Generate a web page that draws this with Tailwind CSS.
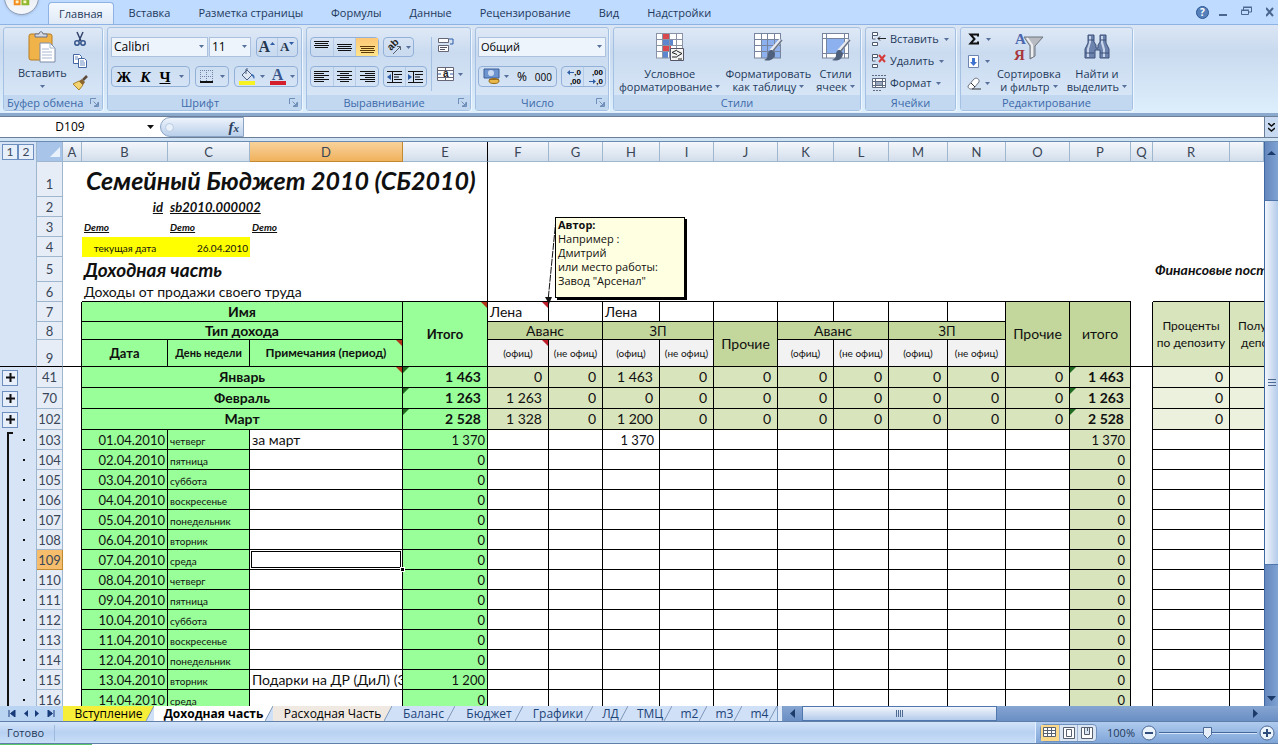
<!DOCTYPE html>
<html lang="ru">
<head>
<meta charset="utf-8">
<title>Семейный Бюджет 2010</title>
<script src="https://cdn.jsdelivr.net/npm/@tailwindcss/browser@4"></script>
</head>
<body class="flex h-screen flex-col overflow-hidden bg-[#bfdbff] font-['Open_Sans','Noto_Sans',sans-serif] text-[11px] leading-4 text-[#1e395b]">

<svg class="hidden" aria-hidden="true">
  <symbol id="dd" viewBox="0 0 5 3"><path d="M0 0h5L2.500 3z" fill="#56709a"/></symbol>
  <symbol id="launch" viewBox="0 0 9 9"><path d="M.5 6V.5H6M8.500 4v4.500H4M3.500 3.500L7 7M7.500 4.500v3h-3" fill="none" stroke="#6f8fb9"/></symbol>
  <symbol id="cells" viewBox="0 0 16 16"><path d="M1.500 1.500h5v3h-5zM1.500 11.500h5v3h-5zM1.500 4.500v3.500h3" fill="#fff" stroke="#4c5a70"/></symbol>
</svg>

<!-- Ribbon tabs -->
<header class="relative flex h-6 shrink-0 items-end justify-between overflow-hidden">
  <button aria-label="Office" class="absolute -top-5 left-1 size-[35px] rounded-full border border-[#8a9bb5] bg-linear-to-b from-[#dfe6ef] to-[#f6f8fb] shadow">
    <svg viewBox="0 0 34 34" class="size-full"><path d="M9 17h7v8H9z" fill="#f28a1c"/><path d="M17 17h8v8h-8z" fill="#8db72c"/><path d="M11 20h3v3h-3zM19 20h3v3h-3z" fill="#fff4c8"/></svg>
  </button>
  <nav class="ml-12 flex items-end" role="tablist">
    <button role="tab" aria-selected="true" class="mr-px h-[22px] rounded-t border border-b-0 border-[#8db2e3] bg-linear-to-b from-[#f4f9ff] to-[#dfe9f6] px-[10px]">Главная</button>
    <button role="tab" class="h-[22px] px-[14px]">Вставка</button>
    <button role="tab" class="h-[22px] px-[14px]">Разметка страницы</button>
    <button role="tab" class="h-[22px] px-[14px]">Формулы</button>
    <button role="tab" class="h-[22px] px-[14px]">Данные</button>
    <button role="tab" class="h-[22px] px-[14px]">Рецензирование</button>
    <button role="tab" class="h-[22px] px-[14px]">Вид</button>
    <button role="tab" class="h-[22px] px-[14px]">Надстройки</button>
  </nav>
  <div class="flex h-full items-center gap-[10px] pr-1">
    <button aria-label="Справка" class="flex size-[13px] items-center justify-center rounded-full border border-[#2d5796] bg-[#5680ba] text-[10px] font-bold leading-none text-white">?</button>
    <button aria-label="Свернуть"><svg class="h-3 w-2"><path d="M0 9h8" stroke="#4a668f" stroke-width="2"/></svg></button>
    <button aria-label="Восстановить" class="ml-1"><svg class="h-3 w-[11px]"><path d="M2.500 4V1.500h8V6H8M.5 4.500h7v4h-7zM0 4h8M2 1h9" fill="none" stroke="#4a668f"/></svg></button>
    <button aria-label="Закрыть" class="ml-1"><svg class="h-3 w-2"><path d="M0 2l7 8M7 2L0 10" stroke="#4a668f" stroke-width="2"/></svg></button>
  </div>
</header>

<!-- Ribbon -->
<section class="flex h-[92px] shrink-0 items-start gap-1 border-t border-b-[3px] border-t-[#8db2e3] border-b-[#8aa9cc] bg-linear-to-b from-[#dbe6f4] via-[#c9daef] via-30% to-[#ddeffc] px-[3px] pt-[2px]">

  <div class="flex h-[84px] w-[100px] flex-col rounded-[3px] border border-[#a4c0e2] bg-linear-to-b from-[#dfe9f6] via-[#cadbf0] via-30% to-[#dbe9f8] shadow-[1px_1px_0_#eef6ff]">
    <div class="flex flex-1 justify-between pt-[3px] pr-[14px] pl-[14px]">
      <button class="flex flex-col items-center">
        <svg class="size-8" viewBox="0 0 32 32"><rect x="3" y="3" width="23" height="26" rx="2" fill="#f0b34a" stroke="#b77c22"/><path d="M9 6V3h4c0-3 4-3 4 0h4v3z" fill="#d5dae2" stroke="#66708a"/><path d="M14 12h10l5 5v14H14z" fill="#fff" stroke="#7c8ca8"/><path d="M24 12v5h5M16 18h7M16 21h10M16 24h10M16 27h10" fill="none" stroke="#a9b8d2"/></svg>
        <span class="mt-[2px]">Вставить</span>
        <svg class="mt-1 h-[3px] w-[5px]"><use href="#dd"/></svg>
      </button>
      <div class="flex flex-col items-center gap-[6px]">
        <button aria-label="Вырезать"><svg class="block size-4" viewBox="0 0 16 16"><path d="M5 1l4 9M11 1L7 10" stroke="#33456c" stroke-width="1.500"/><circle cx="5" cy="12" r="2.200" fill="none" stroke="#33528a" stroke-width="1.500"/><circle cx="11" cy="12" r="2.200" fill="none" stroke="#33528a" stroke-width="1.500"/></svg></button>
        <button aria-label="Копировать"><svg class="block size-4" viewBox="0 0 16 16"><path d="M1.500 1.500h6l2 2v7h-8z" fill="#fff" stroke="#4467a3"/><path d="M6.500 5.500h6l2 2v7h-8z" fill="#fff" stroke="#4467a3"/><path d="M3 4h3M3 6h3M8 8h4M8 10h5M8 12h5" stroke="#6b8cc4"/></svg></button>
        <button aria-label="Формат по образцу"><svg class="block size-4" viewBox="0 0 16 16"><path d="M1 9l6-3 4 4-4 5z" fill="#f3d36f" stroke="#a8812e"/><path d="M7 6l3-2 3 3-2 3z" fill="#8a6530"/><path d="M11 5l4-4" stroke="#5b4a3a" stroke-width="2.500"/></svg></button>
      </div>
    </div>
    <div class="flex h-[15px] items-center justify-between bg-[#c1d8f0] px-[3px] whitespace-nowrap text-[#3e6aaa]"><span>Буфер обмена</span><svg class="size-[9px]"><use href="#launch"/></svg></div>
  </div>

  <div class="flex h-[84px] w-[195px] flex-col rounded-[3px] border border-[#a4c0e2] bg-linear-to-b from-[#dfe9f6] via-[#cadbf0] via-30% to-[#dbe9f8] shadow-[1px_1px_0_#eef6ff]">
    <div class="flex flex-1 flex-col gap-[9px] px-[3px] pt-[9px] text-black">
      <div class="flex h-5 items-stretch gap-px">
        <label class="relative w-[97px]"><select aria-label="Шрифт" class="size-full appearance-none border border-[#abc1de] bg-[#edf4fc] pl-[2px] text-[12px]"><option>Calibri</option></select><svg class="absolute top-2 right-1 h-[3px] w-[5px]"><use href="#dd"/></svg></label>
        <label class="relative w-[42px]"><select aria-label="Размер шрифта" class="size-full appearance-none border border-[#abc1de] bg-[#edf4fc] pl-[2px] text-[12px]"><option>11</option></select><svg class="absolute top-2 right-1 h-[3px] w-[5px]"><use href="#dd"/></svg></label>
        <div class="ml-1 flex flex-1 rounded-sm border border-[#93b1d8] font-['Liberation_Serif',serif] font-bold text-[#24364f]">
          <button class="flex flex-1 items-center justify-center border-r border-[#b4cae6] text-[16px]">A<svg class="mb-2 h-[3px] w-[5px]"><path d="M0 3h5L2.500 0z" fill="#2f5da5"/></svg></button>
          <button class="flex flex-1 items-center justify-center text-[13px]">A<svg class="mb-2 h-[3px] w-[5px]"><path d="M0 0h5L2.500 3z" fill="#2f5da5"/></svg></button>
        </div>
      </div>
      <div class="flex h-[21px] items-stretch gap-[5px]">
        <div class="flex w-[79px] items-center justify-around rounded-sm border border-[#93b1d8] font-['Liberation_Serif',serif] text-[15px] font-bold">
          <button>Ж</button><button class="italic">К</button><button class="underline">Ч</button><svg class="h-[3px] w-[5px]"><use href="#dd"/></svg>
        </div>
        <button aria-label="Границы" class="flex w-[34px] items-center justify-around rounded-sm border border-[#93b1d8]"><svg class="size-[15px]"><path d="M1.500 1v12M7.500 1v12M13.500 1v12M1 1.500h13M1 7.500h13" stroke="#6f84a5" stroke-dasharray="1 1"/><path d="M1 13h13" stroke="#111" stroke-width="2"/></svg><svg class="h-[3px] w-[5px]"><use href="#dd"/></svg></button>
        <div class="flex flex-1 items-center justify-around rounded-sm border border-[#93b1d8]">
          <button aria-label="Цвет заливки" class="flex items-center gap-1"><svg class="h-[17px] w-[18px]" viewBox="0 0 18 17"><path d="M4 7l5-5 5 5-5 5z" fill="#dfe7f2" stroke="#4b5f82"/><path d="M8 6V1h2" fill="none" stroke="#4b5f82"/><path d="M14 6c3 1 3 4 2 5-1-1-1-3-3-4z" fill="#3f6fb7"/><path d="M1 13h16v4H1z" fill="#f6f224"/></svg><svg class="h-[3px] w-[5px]"><use href="#dd"/></svg></button>
          <button aria-label="Цвет текста" class="flex items-center gap-1"><span class="flex h-[17px] w-4 flex-col items-center border-b-4 border-[#d3202c] font-['Liberation_Serif',serif] text-[16px] font-bold leading-[14px] text-[#3a568c]">A</span><svg class="h-[3px] w-[5px]"><use href="#dd"/></svg></button>
        </div>
      </div>
    </div>
    <div class="flex h-[15px] items-center bg-[#c1d8f0] px-[3px] text-[#3e6aaa]"><span class="flex-1 text-center">Шрифт</span><svg class="size-[9px]"><use href="#launch"/></svg></div>
  </div>

  <div class="flex h-[84px] w-[165px] flex-col rounded-[3px] border border-[#a4c0e2] bg-linear-to-b from-[#dfe9f6] via-[#cadbf0] via-30% to-[#dbe9f8] shadow-[1px_1px_0_#eef6ff]">
    <div class="flex flex-1 gap-1 pt-[9px] pl-[3px]">
      <div class="flex w-[117px] flex-col gap-[9px]">
        <div class="flex h-5 gap-1">
          <div class="flex w-[69px] rounded-sm border border-[#93b1d8]">
            <button aria-label="По верхнему краю" class="flex flex-1 items-start justify-center border-r border-[#b4cae6] pt-[3px]"><svg class="h-[9px] w-[15px]"><path d="M0 .5h15M1 2.500h13M0 4.500h15M1 6.500h13" stroke="#111"/></svg></button>
            <button aria-label="По середине" class="flex flex-1 items-center justify-center border-r border-[#b4cae6]"><svg class="h-[7px] w-[15px]"><path d="M0 .5h15M1 2.500h13M0 4.500h15M1 6.500h13" stroke="#111"/></svg></button>
            <button aria-label="По нижнему краю" class="flex flex-1 items-end justify-center bg-linear-to-b from-[#fdc877] to-[#ffe48a] pb-[2px]"><svg class="h-2 w-[15px]"><path d="M0 .5h15M1 2.500h13M0 4.500h15M1 6.500h13" stroke="#5b3a08"/></svg></button>
          </div>
          <button aria-label="Ориентация" class="flex w-[31px] items-center justify-around rounded-sm border border-[#93b1d8]"><svg class="size-4" viewBox="0 0 16 16"><text font-size="10" font-weight="bold" font-family="Liberation Sans" transform="translate(5 12) rotate(-45)" fill="#222">ab</text><path d="M7 15l7-7M14.500 11V7.500H11" stroke="#56606f" fill="none"/></svg><svg class="h-[3px] w-[5px]"><use href="#dd"/></svg></button>
        </div>
        <div class="flex h-[21px] gap-1">
          <div class="flex w-[69px] rounded-sm border border-[#93b1d8]">
            <button aria-label="По левому краю" class="flex flex-1 items-center justify-center border-r border-[#b4cae6]"><svg class="h-[11px] w-[15px]"><path d="M0 .5h15M0 2.500h10M0 4.500h15M0 6.500h10M0 8.500h15M0 10.500h10" stroke="#111"/></svg></button>
            <button aria-label="По центру" class="flex flex-1 items-center justify-center border-r border-[#b4cae6]"><svg class="h-[11px] w-[15px]"><path d="M0 .5h15M3 2.500h9M0 4.500h15M3 6.500h9M0 8.500h15M3 10.500h9" stroke="#111"/></svg></button>
            <button aria-label="По правому краю" class="flex flex-1 items-center justify-center"><svg class="h-[11px] w-[15px]"><path d="M0 .5h15M5 2.500h10M0 4.500h15M5 6.500h10M0 8.500h15M5 10.500h10" stroke="#111"/></svg></button>
          </div>
          <div class="flex w-[44px] rounded-sm border border-[#93b1d8]">
            <button aria-label="Уменьшить отступ" class="flex flex-1 items-center justify-center border-r border-[#b4cae6]"><svg class="h-3 w-[15px]"><path d="M0 .5h15M7 3.500h8M7 6h5M7 8.500h8M0 11.500h15M5.500 0v12" stroke="#111"/><path d="M0 6l4-3v6z" fill="#2f5da5"/></svg></button>
            <button aria-label="Увеличить отступ" class="flex flex-1 items-center justify-center"><svg class="h-3 w-[15px]"><path d="M0 .5h15M7 3.500h8M7 6h5M7 8.500h8M0 11.500h15M5.500 0v12" stroke="#111"/><path d="M4 6L0 3v6z" fill="#2f5da5"/></svg></button>
          </div>
        </div>
      </div>
      <div class="mb-1 flex flex-col gap-3 border-l border-[#a4c0e2] pl-[5px]">
        <button aria-label="Перенос текста"><svg class="size-[17px]" viewBox="0 0 17 17"><path d="M1.500 1.500h10v4h-10zM1.500 8.500h10v6h-10z" fill="#fff" stroke="#667"/><path d="M3 10.500h7M3 12.500h5" stroke="#556"/><path d="M12 2h4v5h-3" fill="none" stroke="#2f5da5"/></svg></button>
        <button aria-label="Объединить" class="flex items-center gap-1"><svg class="h-4 w-[17px]" viewBox="0 0 17 16"><path d="M.5 1.500h16v13H.5zM8.500 1v3M8.500 12v3M0 4.500h17M0 11.500h17" fill="#fff" stroke="#667"/><text x="6" y="11" font-size="10" font-weight="bold" font-family="Liberation Sans" fill="#222">a</text><path d="M1 8h3M13 8h3" stroke="#2f5da5"/></svg><svg class="h-[3px] w-[5px]"><use href="#dd"/></svg></button>
      </div>
    </div>
    <div class="flex h-[15px] items-center bg-[#c1d8f0] px-[3px] text-[#3e6aaa]"><span class="flex-1 text-center">Выравнивание</span><svg class="size-[9px]"><use href="#launch"/></svg></div>
  </div>

  <div class="flex h-[84px] w-[134px] flex-col rounded-[3px] border border-[#a4c0e2] bg-linear-to-b from-[#dfe9f6] via-[#cadbf0] via-30% to-[#dbe9f8] shadow-[1px_1px_0_#eef6ff]">
    <div class="flex flex-1 flex-col gap-[9px] px-[2px] pt-[9px] text-black">
      <label class="relative h-5"><select aria-label="Числовой формат" class="size-full appearance-none border border-[#abc1de] bg-[#edf4fc] pl-[2px]"><option>Общий</option></select><svg class="absolute top-2 right-1 h-[3px] w-[5px]"><use href="#dd"/></svg></label>
      <div class="flex h-[21px] gap-1">
        <div class="flex flex-1 items-center justify-between rounded-sm border border-[#93b1d8] px-1">
          <button aria-label="Финансовый формат" class="flex items-center gap-1"><svg class="size-[17px]" viewBox="0 0 17 17"><path d="M1 1h15v9H1z" fill="#6e94cf" stroke="#3d5f9c"/><circle cx="8" cy="5" r="3" fill="#c9d9f2"/><ellipse cx="11" cy="13" rx="5" ry="2.500" fill="#e9b84a" stroke="#9b6d18"/><path d="M6 11.500h10" stroke="#9b6d18"/></svg><svg class="h-[3px] w-[5px]"><use href="#dd"/></svg></button>
          <button class="text-[12px]">%</button><button class="text-[10px]">000</button>
        </div>
        <div class="flex w-[45px] rounded-sm border border-[#93b1d8] font-['Liberation_Sans',sans-serif] text-[8px] font-bold leading-[9px]">
          <button class="flex flex-1 flex-col items-end justify-center border-r border-[#b4cae6] pr-[2px]"><span class="flex items-center"><svg class="h-[5px] w-[7px]"><path d="M0 2.500L3 0v2h4v1H3v2z" fill="#2f5da5"/></svg>,0</span><span>,00</span></button>
          <button class="flex flex-1 flex-col items-end justify-center pr-[2px]"><span>,00</span><span class="flex items-center"><svg class="h-[5px] w-[7px]"><path d="M7 2.500L4 0v2H0v1h4v2z" fill="#2f5da5"/></svg>,0</span></button>
        </div>
      </div>
    </div>
    <div class="flex h-[15px] items-center bg-[#c1d8f0] px-[3px] text-[#3e6aaa]"><span class="flex-1 text-center">Число</span><svg class="size-[9px]"><use href="#launch"/></svg></div>
  </div>

  <div class="flex h-[84px] w-[248px] flex-col rounded-[3px] border border-[#a4c0e2] bg-linear-to-b from-[#dfe9f6] via-[#cadbf0] via-30% to-[#dbe9f8] shadow-[1px_1px_0_#eef6ff]">
    <div class="flex flex-1 justify-between px-[5px] pt-1 leading-[13px]">
      <button class="flex flex-col items-center">
        <svg class="size-[30px]" viewBox="0 0 30 30"><path d="M1 1h27v25H1z" fill="#fff"/><path d="M7 1h7v6H7zM7 13h9v6H7z" fill="#d9484d"/><path d="M7 7h11v6H7zM7 20h6v6H7z" fill="#5c87cf"/><path d="M1 1.500h27M1 7.500h27M1 13.500h27M1 19.500h27M1 26h27M1.500 1v25M7.500 1v25M14.500 1v25M21.500 1v25M27.500 1v25" stroke="#8a93a5"/><path d="M15.500 16.500h13v12h-13z" fill="#f4f4f4" stroke="#556"/><path d="M22 18l-5 2.500 5 2M17 25h5M22 19l5 2.500-5 3M23 27h4" fill="none" stroke="#222"/></svg>
        <span class="mt-[5px]">Условное</span><span class="flex items-center gap-[3px]">форматирование<svg class="h-[3px] w-[5px]"><use href="#dd"/></svg></span>
      </button>
      <button class="flex flex-col items-center">
        <svg class="size-[30px]" viewBox="0 0 30 30"><path d="M1 1h27v25H1z" fill="#fff"/><path d="M8 8h20v18H8z" fill="#8db0ef"/><path d="M1 1.500h27M1 7.500h27M1 13.500h27M1 19.500h27M1 26h27M1.500 1v25M8.500 1v25M14.500 1v25M21.500 1v25M27.500 1v25" stroke="#77849d"/><path d="M28 8L18 19" stroke="#e8ebf0" stroke-width="4"/><path d="M29 8L19 20" stroke="#6a7486" stroke-width="1.500"/><path d="M19 18c-3 0-4 2-4 5s-2 4-4 5c6 2 11-1 11-7z" fill="#4f607c"/></svg>
        <span class="mt-[5px]">Форматировать</span><span class="flex items-center gap-[3px]">как таблицу<svg class="h-[3px] w-[5px]"><use href="#dd"/></svg></span>
      </button>
      <button class="flex flex-col items-center">
        <svg class="size-[30px]" viewBox="0 0 30 30"><path d="M1 1h27v25H1z" fill="#fff"/><path d="M6 7h17v14H6z" fill="#8db0ef"/><path d="M1 1.500h27M1 6.500h27M1 21.500h27M1 26h27M1.500 1v25M5.500 1v25M23.500 1v25M27.500 1v25" stroke="#77849d"/><path d="M28 8L18 19" stroke="#e8ebf0" stroke-width="4"/><path d="M29 8L19 20" stroke="#6a7486" stroke-width="1.500"/><path d="M19 18c-3 0-4 2-4 5s-2 4-4 5c6 2 11-1 11-7z" fill="#4f607c"/></svg>
        <span class="mt-[5px]">Стили</span><span class="flex items-center gap-[3px]">ячеек<svg class="h-[3px] w-[5px]"><use href="#dd"/></svg></span>
      </button>
    </div>
    <div class="flex h-[15px] items-center justify-center bg-[#c1d8f0] text-[#3e6aaa]">Стили</div>
  </div>

  <div class="flex h-[84px] w-[91px] flex-col rounded-[3px] border border-[#a4c0e2] bg-linear-to-b from-[#dfe9f6] via-[#cadbf0] via-30% to-[#dbe9f8] shadow-[1px_1px_0_#eef6ff]">
    <div class="flex flex-1 flex-col items-start gap-[6px] pt-[3px] pl-[5px]">
      <button class="flex items-center gap-[3px]"><svg class="size-4" viewBox="0 0 16 16"><use href="#cells"/><path d="M15 7.500H7M9 5.500l-2 2 2 2" stroke="#222" fill="none"/></svg>Вставить<svg class="ml-[2px] h-[3px] w-[5px]"><use href="#dd"/></svg></button>
      <button class="flex items-center gap-[3px]"><svg class="size-4" viewBox="0 0 16 16"><use href="#cells"/><path d="M8 2l6 7M14 2L8 9" stroke="#d43a3a" stroke-width="2"/></svg>Удалить<svg class="ml-[2px] h-[3px] w-[5px]"><use href="#dd"/></svg></button>
      <button class="flex items-center gap-[3px]"><svg class="size-4" viewBox="0 0 16 16"><path d="M1.500 3.500h13v9h-13zM4.500 3v10M11.500 3v10M1 6.500h14M1 10.500h14" fill="#fff" stroke="#5d6a80"/><path d="M5 7h6v3H5z" fill="#9aa8bf"/><path d="M1 .5h14M2 15.500h8" stroke="#5d6a80" stroke-dasharray="2 1"/></svg>Формат<svg class="ml-[2px] h-[3px] w-[5px]"><use href="#dd"/></svg></button>
    </div>
    <div class="flex h-[15px] items-center justify-center bg-[#c1d8f0] text-[#3e6aaa]">Ячейки</div>
  </div>

  <div class="flex h-[84px] w-[173px] flex-col rounded-[3px] border border-[#a4c0e2] bg-linear-to-b from-[#dfe9f6] via-[#cadbf0] via-30% to-[#dbe9f8] shadow-[1px_1px_0_#eef6ff]">
    <div class="flex flex-1 justify-between pt-[3px] pr-[5px] pl-[6px] leading-[13px]">
      <div class="flex flex-col gap-[6px]">
        <button aria-label="Сумма" class="flex h-4 items-center gap-[5px]"><svg class="h-3 w-[14px]"><path d="M11 3.500V1.500H3.500L7.500 6l-4 4.500H11v-2" fill="none" stroke="#111" stroke-width="2"/></svg><svg class="h-[3px] w-[5px]"><use href="#dd"/></svg></button>
        <button aria-label="Заполнить" class="flex h-4 items-center gap-1"><svg class="h-[15px] w-[14px]"><path d="M1.500 1.500h10v12h-10z" fill="#fff" stroke="#6d86b1"/><path d="M5 4h3v4h2l-3.500 4L3 8h2z" fill="#3c74d0"/></svg><svg class="h-[3px] w-[5px]"><use href="#dd"/></svg></button>
        <button aria-label="Очистить" class="flex h-4 items-center gap-1"><svg class="h-[15px] w-[14px]"><path d="M1 10l6-7c2-2 6 0 5 3l-5 6c-3 2-6 1-6-2z" fill="#fff" stroke="#6b7383"/><path d="M5 13h9M4 7l4 4" stroke="#333"/></svg><svg class="h-[3px] w-[5px]"><use href="#dd"/></svg></button>
      </div>
      <button class="flex flex-col items-center">
        <svg class="size-[31px]" viewBox="0 0 31 31"><path d="M11 6h19l-8 9v10l-5 3V15z" fill="#b8bcc2" stroke="#6f757e"/><path d="M14 7l5 7v12" fill="none" stroke="#eceef0" stroke-width="2"/><text x="2" y="13" font-size="15" font-weight="bold" font-family="Liberation Serif" fill="#4a66ad">А</text><text x="1" y="29" font-size="15" font-weight="bold" font-family="Liberation Serif" fill="#a8373b">Я</text></svg>
        <span class="mt-[5px]">Сортировка</span><span class="flex items-center gap-[3px]">и фильтр<svg class="h-[3px] w-[5px]"><use href="#dd"/></svg></span>
      </button>
      <button class="flex flex-col items-center">
        <svg class="size-[31px]" viewBox="0 0 31 31"><path d="M7 4h6v7l2 3v3h2v-3l2-3V4h6v8l3 6v9h-9v-8h-5v8H4v-9l3-6z" fill="#6c83ad" stroke="#3d5078"/><path d="M8 5h2v6l-2 7v8H6v-8l2-6zM20 5h2v6l2 7v8h-2v-7l-2-7z" fill="#c8d4ea"/><path d="M4 22h9M19 22h9M7 9h6M19 9h6" stroke="#3d5078"/></svg>
        <span class="mt-[5px]">Найти и</span><span class="flex items-center gap-[3px]">выделить<svg class="h-[3px] w-[5px]"><use href="#dd"/></svg></span>
      </button>
    </div>
    <div class="flex h-[15px] items-center justify-center bg-[#c1d8f0] text-[#3e6aaa]">Редактирование</div>
  </div>
</section>

<!-- Formula bar -->
<section class="flex h-[22px] shrink-0 items-stretch border-y border-[#6c7f99] bg-white text-[12px] text-black">
  <input aria-label="Имя" value="D109" class="w-[140px] bg-white text-center">
  <button aria-label="Список имён" class="flex w-5 items-center justify-center"><svg class="h-1 w-[7px]"><path d="M0 0h7L3.500 4z" fill="#111"/></svg></button>
  <div class="flex w-[84px] items-center justify-between rounded-l-full border border-[#8aa3c4] bg-linear-to-b from-[#eef4fc] to-[#b9cfea] pr-1 pl-1">
    <span class="size-[9px] rounded-full border border-[#b9cbe2] bg-[#e8f0fa]"></span>
    <button class="flex items-baseline font-['Liberation_Serif',serif] text-[15px] font-bold italic text-[#2b3f60]">f<span class="text-[11px]">x</span></button>
  </div>
  <input aria-label="Строка формул" class="min-w-0 flex-1 bg-white px-1">
  <button aria-label="Развернуть строку формул" class="flex w-[14px] items-center justify-center border-l border-[#6c7f99] bg-[#c7daf2]"><svg class="h-[9px] w-[7px]"><path d="M0 0l3.500 3L7 0M0 5l3.500 3L7 5" fill="none" stroke="#111" stroke-width="1.500"/></svg></button>
</section>
<div class="h-1 shrink-0 border-b border-[#6c8bb0] bg-[#cfe3f4]"></div>

<!-- Worksheet -->
<main class="flex min-h-0 flex-1">
  <div class="relative min-w-0 flex-1 overflow-hidden bg-white font-['Lato','Open_Sans',sans-serif] text-[13px] leading-4 text-[#101010]">
    <table class="w-full table-fixed border-separate border-spacing-0 whitespace-nowrap">
      <colgroup>
        <col class="w-[37px]"><col class="w-[26px]"><col class="w-[19px]"><col class="w-[86px]"><col class="w-[82px]"><col class="w-[153px]"><col class="w-[85px]"><col class="w-[61px]"><col class="w-[54px]"><col class="w-[57px]"><col class="w-[54px]"><col class="w-[64px]"><col class="w-[56px]"><col class="w-[55px]"><col class="w-[59px]"><col class="w-[58px]"><col class="w-[64px]"><col class="w-[61px]"><col class="w-[22px]"><col class="w-[77px]"><col>
      </colgroup>
      <thead id="head"></thead>
      <tbody id="top">
        <tr class="h-[35px]"><td class="border-r border-[#9eb6ce] bg-[#d6e4f6]"></td><th class="border-r border-b border-[#9eb6ce] bg-[#e6edf7] pb-1 align-bottom font-normal text-[#3a4657]">1</th><td></td><td colspan="4" class="border-r border-black pl-1 text-[25px] font-bold italic leading-[34px]">Семейный Бюджет 2010 (СБ2010)</td></tr>
        <tr class="h-5"><td class="border-r border-[#9eb6ce] bg-[#d6e4f6]"></td><th class="border-r border-b border-[#9eb6ce] bg-[#e6edf7] font-normal text-[#3a4657]">2</th><td></td><td class="pr-[5px] text-right font-bold italic underline">id</td><td colspan="3" class="border-r border-black pl-[2px] font-bold italic underline">sb2010.000002</td></tr>
        <tr class="h-5"><td class="border-r border-[#9eb6ce] bg-[#d6e4f6]"></td><th class="border-r border-b border-[#9eb6ce] bg-[#e6edf7] font-normal text-[#3a4657]">3</th><td></td><td class="pl-[2px] text-[10px] font-bold italic underline">Demo</td><td class="pl-[2px] text-[10px] font-bold italic underline">Demo</td><td colspan="2" class="border-r border-black pl-[2px] text-[10px] font-bold italic underline">Demo</td></tr>
        <tr class="h-5"><td class="border-r border-[#9eb6ce] bg-[#d6e4f6]"></td><th class="border-r border-b border-[#9eb6ce] bg-[#e6edf7] font-normal text-[#3a4657]">4</th><td></td><td class="bg-[#ffff00] pt-[2px] text-center text-[10px]">текущая дата</td><td class="bg-[#ffff00] pt-[2px] pr-[2px] text-right text-[10px]">26.04.2010</td><td colspan="2" class="border-r border-black"></td></tr>
        <tr class="h-[25px]"><td class="border-r border-[#9eb6ce] bg-[#d6e4f6]"></td><th class="border-r border-b border-[#9eb6ce] bg-[#e6edf7] font-normal text-[#3a4657]">5</th><td></td><td colspan="4" class="border-r border-black pl-[2px] text-[19px] font-bold italic">Доходная часть</td><td colspan="12"></td><td colspan="2" class="overflow-hidden pl-[2px] text-[14px] font-bold italic">Финансовые поступления</td></tr>
        <tr class="h-5"><td class="border-r border-[#9eb6ce] bg-[#d6e4f6]"></td><th class="border-r border-b border-[#9eb6ce] bg-[#e6edf7] font-normal text-[#3a4657]">6</th><td></td><td colspan="4" class="border-r border-b border-black pl-[2px] text-[14px]">Доходы от продажи своего труда</td><td colspan="11" class="border-b border-black"></td><td></td><td colspan="2" class="border-b border-black"></td></tr>
        <tr class="h-5"><td class="border-r border-[#9eb6ce] bg-[#d6e4f6]"></td><th class="border-r border-b border-[#9eb6ce] bg-[#e6edf7] font-normal text-[#3a4657]">7</th><td class="border-r border-black"></td><td colspan="3" class="border-r border-b border-black bg-[#99ff99] text-center text-[14px] font-bold">Имя</td><td rowspan="3" class="relative border-r border-b border-black bg-[#99ff99] text-center font-bold">Итого<i class="absolute top-0 right-0 border-t-[6px] border-l-[6px] border-t-[#b3361b] border-l-transparent"></i></td><td class="relative border-r border-b border-black pl-[2px] text-[14px]">Лена<i class="absolute top-0 right-0 border-t-[6px] border-l-[6px] border-t-[#c0202b] border-l-transparent"></i></td><td class="border-r border-b border-black"></td><td class="border-r border-b border-black pl-[2px] text-[14px]">Лена</td><td class="border-r border-b border-black"></td><td class="border-r border-b border-black"></td><td class="border-r border-b border-black"></td><td class="border-r border-b border-black"></td><td class="border-r border-b border-black"></td><td class="border-r border-b border-black"></td><td rowspan="3" class="border-r border-b border-black bg-[#c3d69b] text-center text-[14px]">Прочие</td><td rowspan="3" class="border-r border-b border-black bg-[#c3d69b] text-center text-[14px]">итого</td><td class="border-r border-black"></td><td rowspan="3" class="border-r border-b border-black bg-[#d8e4bc] text-center text-[12px] leading-[17px]">Проценты<br>по депозиту</td><td rowspan="3" class="overflow-hidden border-b border-black bg-[#d8e4bc] pl-2 text-[12px] leading-[17px]">Получено<br>&nbsp;депозит</td></tr>
        <tr class="h-[18px]"><td class="border-r border-[#9eb6ce] bg-[#d6e4f6]"></td><th class="border-r border-b border-[#9eb6ce] bg-[#e6edf7] font-normal text-[#3a4657]">8</th><td class="border-r border-black"></td><td colspan="3" class="border-r border-b border-black bg-[#99ff99] text-center text-[14px] font-bold">Тип дохода</td><td colspan="2" class="border-r border-b border-black bg-[#c3d69b] text-center text-[14px]">Аванс</td><td colspan="2" class="border-r border-b border-black bg-[#c3d69b] text-center">ЗП</td><td rowspan="2" class="border-r border-b border-black bg-[#c3d69b] text-center text-[14px]">Прочие</td><td colspan="2" class="border-r border-b border-black bg-[#c3d69b] text-center text-[14px]">Аванс</td><td colspan="2" class="border-r border-b border-black bg-[#c3d69b] text-center">ЗП</td><td class="border-r border-black"></td></tr>
        <tr class="h-[27px]"><td class="border-r border-b border-r-[#9eb6ce] border-b-black bg-[#d6e4f6]"></td><th class="border-r border-b border-r-[#9eb6ce] border-b-black bg-[#e6edf7] align-bottom font-normal text-[#3a4657]">9</th><td class="border-r border-b border-black"></td><td class="border-r border-b border-black bg-[#99ff99] text-center font-bold">Дата</td><td class="border-r border-b border-black bg-[#99ff99] text-center text-[11px] font-bold">День недели</td><td class="relative border-r border-b border-black bg-[#99ff99] text-center text-[12px] font-bold">Примечания (период)<i class="absolute top-0 right-0 border-t-[6px] border-l-[6px] border-t-[#b3361b] border-l-transparent"></i></td><td class="relative border-r border-b border-black bg-[#f2f2f2] text-center text-[10px]">(офиц)<i class="absolute top-0 right-0 border-t-[6px] border-l-[6px] border-t-[#c0202b] border-l-transparent"></i></td><td class="border-r border-b border-black bg-[#f2f2f2] text-center text-[10px]">(не офиц)</td><td class="border-r border-b border-black bg-[#f2f2f2] text-center text-[10px]">(офиц)</td><td class="border-r border-b border-black bg-[#f2f2f2] text-center text-[10px]">(не офиц)</td><td class="border-r border-b border-black bg-[#f2f2f2] text-center text-[10px]">(офиц)</td><td class="border-r border-b border-black bg-[#f2f2f2] text-center text-[10px]">(не офиц)</td><td class="border-r border-b border-black bg-[#f2f2f2] text-center text-[10px]">(офиц)</td><td class="border-r border-b border-black bg-[#f2f2f2] text-center text-[10px]">(не офиц)</td><td class="border-r border-b border-black"></td></tr>
      </tbody>
      <tbody id="months"></tbody>
      <tbody id="days"></tbody>
    </table>

    <!-- Cell comment with its pointer -->
    <svg class="pointer-events-none absolute top-[75px] left-[544px] h-[90px] w-4" aria-hidden="true"><path d="M12 2L4 84" stroke="#111" stroke-dasharray="7 1"/><path d="M1 80h7l-3 7z" fill="#111"/></svg>
    <aside class="absolute top-[75px] left-[555px] h-[81px] w-[130px] border border-black bg-[#ffffe1] px-[2px] font-['Open_Sans',sans-serif] text-[11px] leading-[14px] shadow-[2px_2px_0_#000]"><b>Автор:</b><br>Например :<br>Дмитрий<br>или место работы:<br>Завод "Арсенал"</aside>
  </div>

  <!-- Vertical scroll bar -->
  <div class="flex w-[14px] shrink-0 flex-col items-center justify-between border-l border-[#3f69a3] bg-linear-to-r from-[#6488bd] to-[#7fa2d3]">
    <button aria-label="Вверх" class="flex h-[22px] items-center"><svg class="h-1 w-[9px]"><path d="M0 4h9L4.500 0z" fill="#1c3b6b"/></svg></button>
    <div class="mt-9 mb-auto flex h-[365px] w-full items-center justify-center border-y border-[#4f76ad] bg-linear-to-r from-[#f2f6fc] to-[#b4cbea]"><svg class="h-[7px] w-2"><path d="M0 .5h8M0 3.500h8M0 6.500h8" stroke="#4f6a92"/></svg></div>
    <button aria-label="Вниз" class="flex h-4 items-center"><svg class="h-[5px] w-[9px]"><path d="M0 0h9L4.500 5z" fill="#1c3b6b"/></svg></button>
  </div>
</main>

<!-- Sheet tabs and horizontal scroll bar -->
<footer class="flex h-4 shrink-0 items-stretch border-b border-[#5f7fa8] bg-[#b9d3f3] text-[12px] text-[#1d4377]">
  <div class="flex w-[63px] items-center justify-around px-1">
    <button aria-label="Первый лист"><svg class="block h-[7px] w-2"><path d="M1 0v7M7 0v7L2.500 3.500z" fill="#173a78" stroke="#173a78"/></svg></button>
    <button aria-label="Предыдущий лист"><svg class="block h-[7px] w-1"><path d="M4 0v7L0 3.500z" fill="#173a78"/></svg></button>
    <button aria-label="Следующий лист"><svg class="block h-[7px] w-1"><path d="M0 0v7l4-3.500z" fill="#173a78"/></svg></button>
    <button aria-label="Последний лист"><svg class="block h-[7px] w-2"><path d="M7 0v7M1 0v7l4.500-3.500z" fill="#173a78" stroke="#173a78"/></svg></button>
  </div>
  <nav id="tabs" class="flex shrink-0"></nav>
  <div class="flex w-[6px] items-center justify-center border-x border-[#7d9cc6] bg-[#dfeafa]"></div>
  <div class="flex min-w-0 flex-1 items-stretch bg-linear-to-b from-[#86a5d2] to-[#6a8fc4]">
    <button aria-label="Влево" class="flex w-[19px] items-center justify-center"><svg class="h-[9px] w-[5px]"><path d="M5 0v9L0 4.500z" fill="#1c3b6b"/></svg></button>
    <div class="flex w-[195px] items-center justify-center border border-[#4f76ad] bg-linear-to-b from-[#f2f6fc] to-[#b4cbea]"><svg class="h-[7px] w-2"><path d="M.5 0v7M2.500 0v7M4.500 0v7M6.500 0v7" stroke="#4f6a92"/></svg></div>
    <button aria-label="Вправо" class="mr-5 ml-auto flex items-center"><svg class="h-[9px] w-[5px]"><path d="M0 0v9l5-4.500z" fill="#1c3b6b"/></svg></button>
  </div>
</footer>

<!-- Status bar -->
<section class="flex h-[21px] shrink-0 items-center justify-between bg-linear-to-b from-[#d3e4f9] via-[#b8d1f2] via-50% to-[#c9dff8]">
  <span class="border-r border-[#9db9de] pr-[10px] pl-[7px]">Готово</span>
  <div class="flex h-full items-center border-l border-[#e4f0ff] bg-linear-to-b from-[#b0cbee] to-[#7fa5d8] pl-1">
    <div class="flex h-[18px] w-[57px] rounded-sm border border-[#6f8fbd] bg-[#dbe6f4]">
      <button aria-label="Обычный" class="flex flex-1 items-center justify-center bg-[#fbd98a]"><svg class="h-[11px] w-[13px]"><path d="M.5.5h12v9H.5zM4.500 0v10M8.500 0v10M0 3.500h13M0 6.500h13" fill="#fff" stroke="#57606f"/></svg></button>
      <button aria-label="Разметка страницы" class="flex flex-1 items-center justify-center border-x border-[#9fb5d3]"><svg class="size-3"><path d="M.5.5h11v11H.5zM3.500 2.500h5v7h-5z" fill="#fff" stroke="#57606f"/></svg></button>
      <button aria-label="Страничный режим" class="flex flex-1 items-center justify-center"><svg class="size-3"><path d="M.5.5h11v11H.5zM3.500 0v7.500h5V0M6.500 0v4" fill="#fff" stroke="#57606f"/></svg></button>
    </div>
    <button class="ml-2 w-8 text-[11px]">100%</button>
    <button aria-label="Уменьшить" class="ml-1"><svg class="block size-4"><circle cx="8" cy="8" r="7" fill="#eaf2fc" stroke="#4c6a96"/><path d="M4 8h8" stroke="#2f4d7c" stroke-width="2"/></svg></button>
    <div class="relative w-[102px]">
      <input type="range" aria-label="Масштаб" value="50" class="absolute inset-0 m-auto h-4 w-full opacity-0">
      <svg class="block h-4 w-full" viewBox="0 0 102 16"><path d="M2 7.500h98" stroke="#45689c"/><path d="M2 8.500h98" stroke="#d5e6fb"/><path d="M46.500 2.500h8v7l-4 4-4-4z" fill="#e6eefa" stroke="#4c6a96"/></svg>
    </div>
    <button aria-label="Увеличить" class="mr-[3px]"><svg class="block size-4"><circle cx="8" cy="8" r="7" fill="#eaf2fc" stroke="#4c6a96"/><path d="M4 8h8M8 4v8" stroke="#2f4d7c" stroke-width="2"/></svg></button>
  </div>
</section>
<div class="flex h-[2px] shrink-0 border-t border-[#5f7fa8] bg-white"><span class="w-[92px] bg-[#58c46c]"></span></div>

<script>
  // Column letters
  const letters = ['A','B','C','D','E','F','G','H','I','J','K','L','M','N','O','P','Q','R',''];
  document.getElementById('head').innerHTML =
    '<tr class="h-5 text-[#3a4657]"><td class="border-r border-[#9eb6ce] bg-[#d6e4f6] p-0"><div class="flex pl-[2px]">' +
    '<button class="size-4 border border-[#6d8fbf] bg-[#e6effa] text-[12px] leading-none">1</button><button class="size-4 border border-[#6d8fbf] bg-[#e6effa] text-[12px] leading-none">2</button></div></td>' +
    '<th class="border-r border-b border-[#9eb6ce] bg-[#a9c4e9] p-0"><svg class="ml-auto block h-3 w-[14px]"><path d="M12 1v10H2z" fill="#e9f1fb"/></svg></th>' +
    letters.map(l => l === 'D'
      ? '<th class="border-r border-b border-[#c28a30] bg-linear-to-b from-[#f8d29a] to-[#f0b25c] p-0 font-normal">D</th>'
      : l === 'E'
      ? '<th class="border-r border-b border-r-black border-b-[#9eb6ce] bg-linear-to-b from-[#f4f7fb] to-[#d3deec] p-0 font-normal">E</th>'
      : '<th class="border-r border-b border-[#9eb6ce] bg-linear-to-b from-[#f4f7fb] to-[#d3deec] p-0 font-normal">' + l + '</th>').join('') + '</tr>';

  // Collapsed month totals: row number, name, F..O values, total
  const months = [
    [41, 'Январь', ['0','0','1 463','0','0','0','0','0','0','0'], '1 463'],
    [70, 'Февраль', ['1 263','0','0','0','0','0','0','0','0','0'], '1 263'],
    [102, 'Март', ['1 328','0','1 200','0','0','0','0','0','0','0'], '2 528'],
  ];
  const greenMark = '<i class="absolute top-0 left-0 border-t-[6px] border-r-[6px] border-t-[#1f6b1f] border-r-transparent"></i>';
  document.getElementById('months').innerHTML = months.map(([n, name, v, sum], i) =>
    '<tr class="h-[21px] text-[14px]"><td class="border-r border-[#9eb6ce] bg-[#d6e4f6] p-0 pl-[2px]"><button aria-label="Развернуть" class="block size-4 border border-[#6d8fbf] bg-[#e6effa]"><svg class="m-auto block size-[9px]"><path d="M0 4.500h9M4.500 0v9" stroke="#111" stroke-width="2"/></svg></button></td>' +
    '<th class="border-r border-b border-[#9eb6ce] bg-[#e6edf7] p-0 text-[13px] font-normal text-[#3a4657]">' + n + '</th><td class="border-r border-black"></td>' +
    '<td colspan="3" class="relative border-r border-b border-black bg-[#99ff99] p-0 text-center font-bold">' + name + (i ? '' : '<i class="absolute top-0 right-0 border-t-[6px] border-l-[6px] border-t-[#b3361b] border-l-transparent"></i>') + '</td>' +
    '<td class="relative border-r border-b border-black bg-[#99ff99] p-0 pr-[6px] text-right font-bold">' + greenMark + sum + '</td>' +
    v.map(x => '<td class="border-r border-b border-black bg-[#d8e4bc] p-0 pr-[6px] text-right">' + x + '</td>').join('') +
    '<td class="relative border-r border-b border-black bg-[#d8e4bc] p-0 pr-[6px] text-right font-bold">' + greenMark + sum + '</td>' +
    '<td class="border-r border-black"></td><td class="border-r border-b border-black bg-[#ebf1dd] p-0 pr-[6px] text-right">0</td><td class="border-b border-black bg-[#ebf1dd]"></td></tr>').join('');

  // Days of April
  const week = ['четверг','пятница','суббота','воскресенье','понедельник','вторник','среда'];
  const blank = '<td class="border-r border-b border-black p-0"></td>';
  document.getElementById('days').innerHTML = Array.from({ length: 14 }, (_, i) => {
    const n = 103 + i, date = String(i + 1).padStart(2, '0') + '.04.2010';
    const note = i === 0 ? 'за март' : i === 12 ? 'Подарки на ДР (ДиЛ) (3000)' : '';
    const e = i === 0 ? '1 370' : i === 12 ? '1 200' : '0';
    const head = n === 109
      ? '<th class="border-r border-b border-[#c28a30] bg-[#f6bd6c] p-0 font-normal text-[#3a4657]">'
      : '<th class="border-r border-b border-[#9eb6ce] bg-[#e6edf7] p-0 font-normal text-[#3a4657]">';
    return '<tr class="h-5"><td class="border-r border-[#9eb6ce] bg-[#d6e4f6] p-0"><svg class="block h-5 w-9">' +
      (i ? '<path d="M8 0v20" stroke="#111" stroke-width="2"/>' : '<path d="M8 20V3h5" fill="none" stroke="#111" stroke-width="2"/>') +
      '<path d="M23 10h2" stroke="#111" stroke-width="2"/></svg></td>' + head + n + '</th><td class="border-r border-black"></td>' +
      '<td class="border-r border-b border-black bg-[#99ff99] p-0 pr-[2px] text-right">' + date + '</td>' +
      '<td class="border-r border-b border-black bg-[#99ff99] p-0 pt-[2px] pl-[2px] text-[10px]">' + week[i % 7] + '</td>' +
      (n === 109
        ? '<td class="relative border-r border-b border-black p-0"><i class="absolute -inset-px border border-black bg-white outline-1 -outline-offset-[3px] outline-black"></i><i class="absolute -right-[3px] -bottom-[3px] size-[5px] border border-white bg-black"></i></td>'
        : '<td class="overflow-hidden border-r border-b border-black p-0 pl-[2px] text-[14px]">' + note + '</td>') +
      '<td class="border-r border-b border-black bg-[#99ff99] p-0 pr-[2px] text-right">' + e + '</td>' +
      blank + blank + (i ? blank : '<td class="border-r border-b border-black p-0 pr-[5px] text-right">1 370</td>') + blank.repeat(7) +
      '<td class="border-r border-b border-black bg-[#d8e4bc] p-0 pr-[5px] text-right">' + (i ? '0' : '1 370') + '</td>' +
      '<td class="border-r border-black"></td>' + blank + '<td class="border-b border-black"></td></tr>';
  }).join('');

  // Sheet tabs: name, width, look
  const plain = 'flex items-stretch justify-between bg-[#cfe0f7]';
  const tabs = [
    ['Вступление', 91, 'flex items-stretch justify-between bg-[#f7ee3a] text-black'],
    ['Доходная часть', 119, 'flex items-stretch justify-between bg-white font-bold text-black'],
    ['Расходная Часть', 119, 'flex items-stretch justify-between bg-[#efe9e2] text-black'],
    ['Баланс', 63, plain], ['Бюджет', 68, plain], ['Графики', 70, plain], ['ЛД', 35, plain],
    ['ТМЦ', 44, plain], ['m2', 35, plain], ['m3', 35, plain], ['m4', 35, plain],
  ];
  document.getElementById('tabs').innerHTML = tabs.map(([t, w, c]) =>
    '<button class="' + c + '" style="width:' + w + 'px"><span class="flex-1 pl-2 text-center whitespace-nowrap">' + t + '</span><svg class="h-[15px] w-2"><path d="M0 15L8 0v15z" fill="#cfe0f7"/><path d="M0 15L8 0" stroke="#7f97b8"/></svg></button>').join('');
</script>
</body>
</html>
